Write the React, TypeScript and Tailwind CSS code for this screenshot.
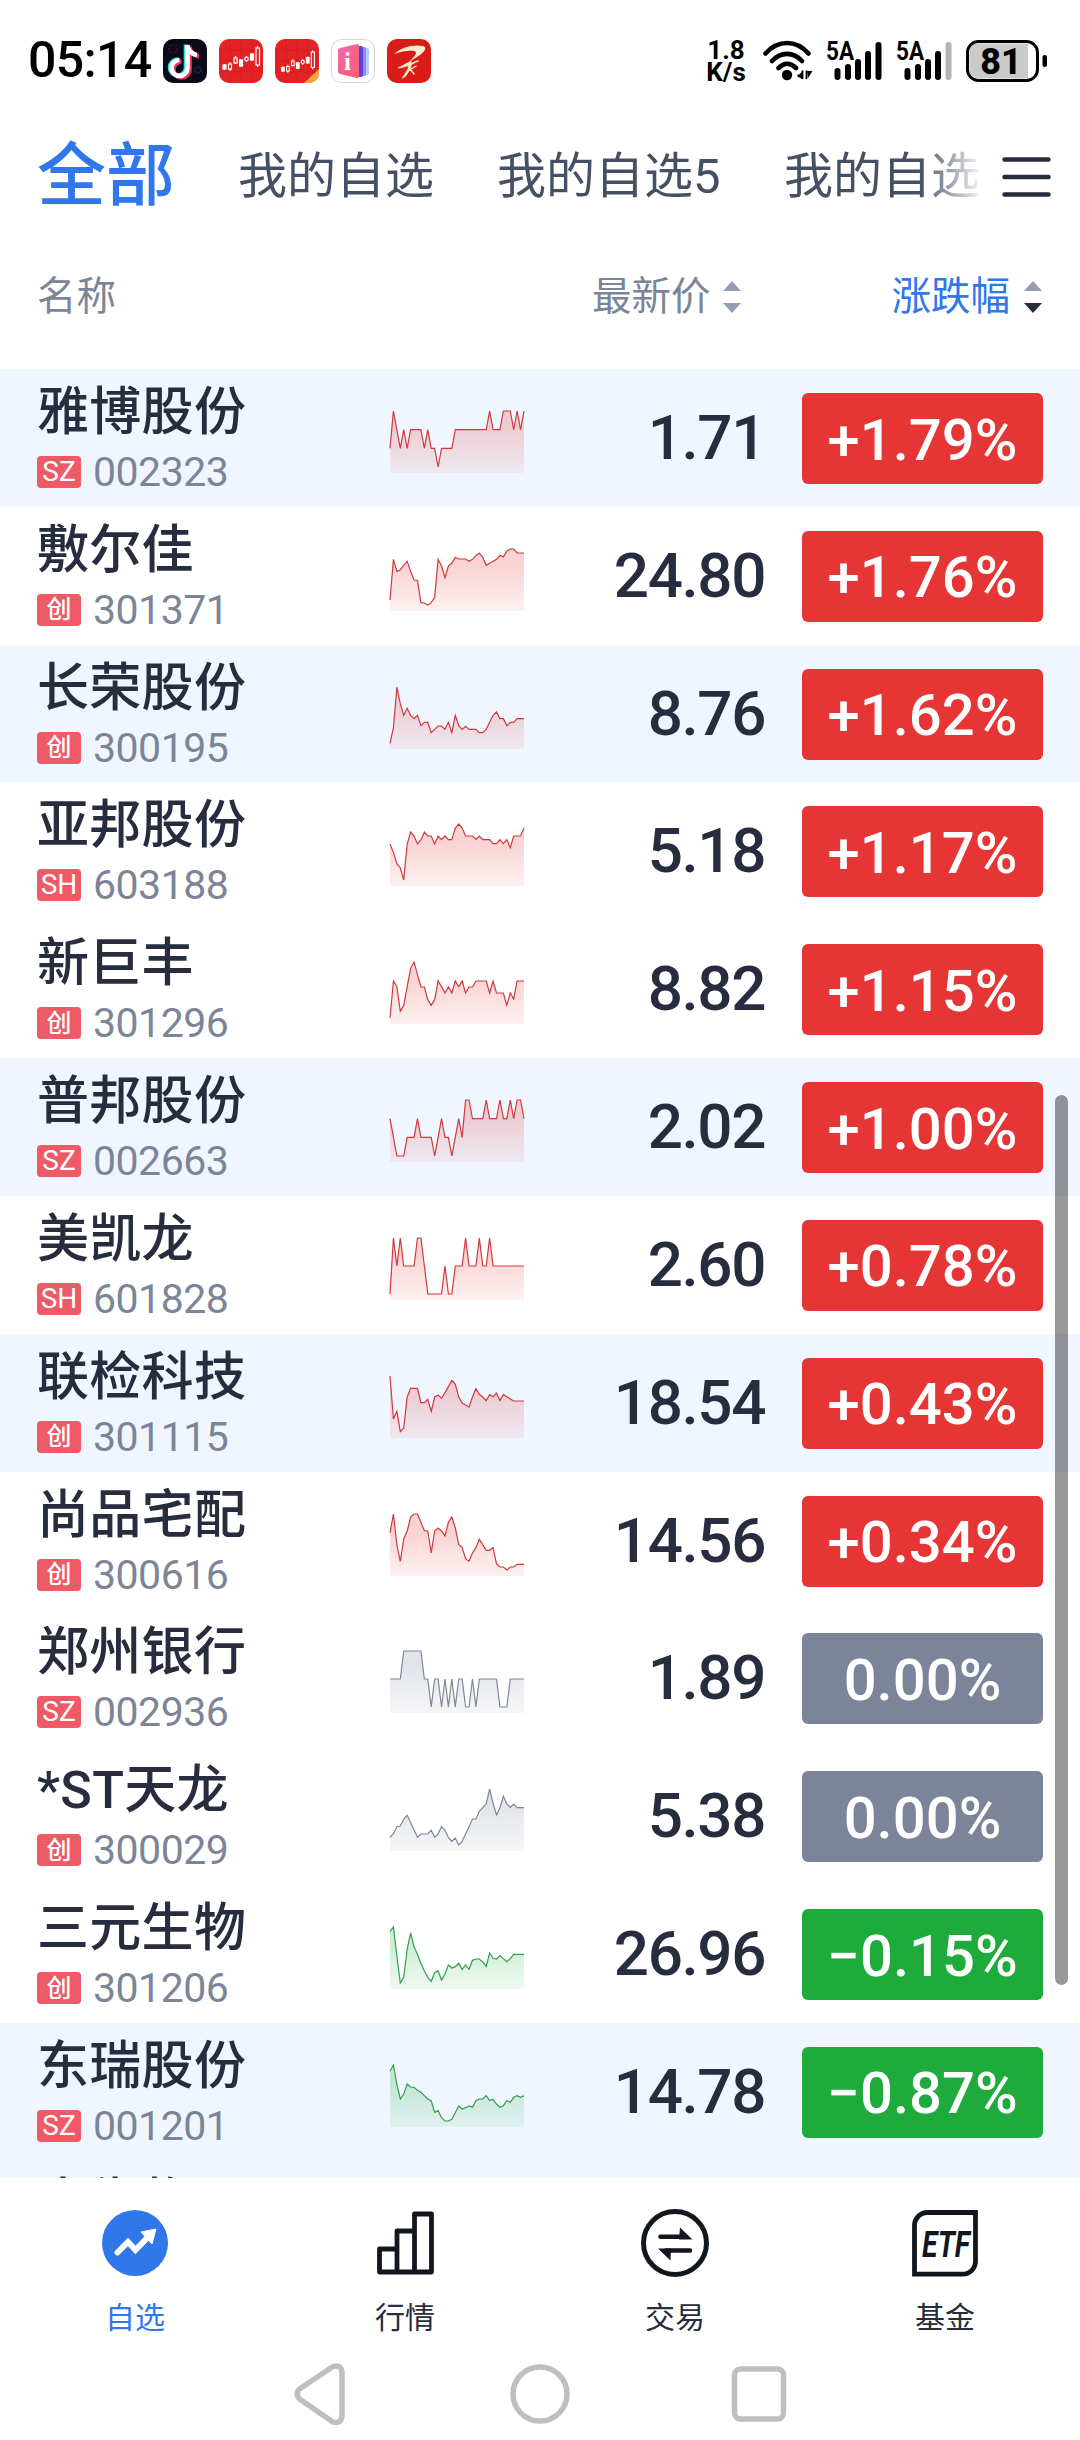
import { clsx } from "clsx";

type Trend = "up" | "flat" | "down";

type Stock = {
  name: string;
  market: string;
  code: string;
  price: string;
  change: string;
  trend: Trend;
  held?: boolean;
  // 40 samples, distance from the top of the chart
  line: number[];
};

const STOCKS: Stock[] = [
  {
    name: "雅博股份", market: "SZ", code: "002323", price: "1.71", change: "+1.79%", trend: "up", held: true,
    line: [112, 0, 56, 112, 56, 112, 56, 56, 56, 56, 112, 56, 112, 112, 168, 112, 112, 112, 112, 56, 56, 56, 56, 56, 56, 56, 56, 56, 56, 0, 56, 56, 56, 0, 0, 0, 56, 0, 56, 0],
  },
  {
    name: "敷尔佳", market: "创", code: "301371", price: "24.80", change: "+1.76%", trend: "up",
    line: [153, 31, 67, 62, 49, 37, 67, 93, 94, 161, 162, 168, 161, 145, 31, 51, 86, 51, 42, 25, 30, 30, 30, 37, 31, 20, 12, 25, 49, 43, 37, 31, 19, 24, 6, 0, 0, 12, 12, 12],
  },
  {
    name: "长荣股份", market: "创", code: "300195", price: "8.76", change: "+1.62%", trend: "up", held: true,
    line: [169, 122, 0, 50, 85, 64, 85, 95, 85, 116, 106, 106, 137, 127, 117, 117, 127, 106, 137, 85, 116, 127, 118, 127, 127, 127, 137, 137, 127, 106, 85, 75, 95, 95, 116, 106, 106, 95, 95, 95],
  },
  {
    name: "亚邦股份", market: "SH", code: "603188", price: "5.18", change: "+1.17%", trend: "up",
    line: [60, 85, 119, 132, 168, 60, 24, 36, 60, 48, 24, 36, 36, 60, 36, 47, 36, 47, 47, 12, 0, 12, 36, 36, 36, 46, 36, 47, 47, 47, 59, 59, 47, 59, 47, 71, 36, 36, 36, 12],
  },
  {
    name: "新巨丰", market: "创", code: "301296", price: "8.82", change: "+1.15%", trend: "up",
    line: [168, 57, 74, 148, 131, 74, 19, 0, 38, 75, 75, 113, 130, 113, 57, 74, 93, 75, 93, 57, 74, 57, 93, 75, 75, 57, 57, 57, 57, 93, 57, 93, 93, 93, 130, 93, 111, 57, 57, 57],
  },
  {
    name: "普邦股份", market: "SZ", code: "002663", price: "2.02", change: "+1.00%", trend: "up", held: true,
    line: [56, 112, 168, 168, 168, 112, 112, 112, 56, 112, 112, 112, 112, 168, 112, 56, 112, 112, 168, 112, 56, 112, 0, 0, 56, 56, 56, 56, 0, 56, 56, 56, 0, 56, 56, 0, 56, 0, 0, 56],
  },
  {
    name: "美凯龙", market: "SH", code: "601828", price: "2.60", change: "+0.78%", trend: "up",
    line: [168, 0, 84, 0, 84, 84, 84, 84, 0, 0, 84, 168, 168, 168, 168, 168, 84, 168, 168, 84, 84, 84, 0, 84, 84, 84, 0, 84, 84, 0, 84, 84, 84, 84, 84, 84, 84, 84, 84, 84],
  },
  {
    name: "联检科技", market: "创", code: "301115", price: "18.54", change: "+0.43%", trend: "up", held: true,
    line: [0, 129, 106, 167, 156, 63, 37, 37, 37, 80, 80, 70, 106, 63, 57, 67, 50, 32, 13, 25, 63, 81, 87, 93, 63, 38, 55, 63, 74, 56, 62, 51, 74, 56, 62, 69, 75, 75, 75, 75],
  },
  {
    name: "尚品宅配", market: "创", code: "300616", price: "14.56", change: "+0.34%", trend: "up",
    line: [57, 0, 93, 142, 75, 51, 9, 0, 0, 25, 50, 51, 117, 51, 42, 51, 66, 25, 9, 42, 91, 101, 134, 142, 117, 101, 76, 92, 109, 109, 101, 150, 159, 159, 168, 159, 159, 151, 151, 151],
  },
  {
    name: "郑州银行", market: "SZ", code: "002936", price: "1.89", change: "0.00%", trend: "flat",
    line: [84, 84, 84, 84, 0, 0, 0, 0, 0, 0, 84, 84, 168, 84, 84, 168, 84, 168, 84, 168, 84, 84, 168, 168, 84, 168, 84, 84, 84, 84, 84, 84, 168, 168, 168, 84, 84, 84, 84, 84],
  },
  {
    name: "*ST天龙", market: "创", code: "300029", price: "5.38", change: "0.00%", trend: "flat",
    line: [145, 134, 113, 111, 90, 79, 101, 123, 145, 135, 135, 135, 124, 145, 135, 113, 124, 146, 157, 147, 168, 157, 135, 113, 90, 90, 67, 56, 45, 0, 43, 78, 56, 22, 45, 55, 45, 56, 56, 56],
  },
  {
    name: "三元生物", market: "创", code: "301206", price: "26.96", change: "−0.15%", trend: "down",
    line: [13, 0, 87, 168, 151, 66, 18, 59, 82, 109, 132, 151, 163, 137, 131, 159, 141, 114, 123, 119, 109, 127, 114, 127, 100, 96, 96, 105, 118, 78, 94, 96, 86, 95, 104, 95, 82, 82, 82, 82],
  },
  {
    name: "东瑞股份", market: "SZ", code: "001201", price: "14.78", change: "−0.87%", trend: "down", held: true,
    line: [19, 0, 58, 102, 87, 57, 66, 67, 76, 82, 92, 102, 108, 142, 137, 158, 168, 168, 163, 143, 123, 132, 128, 123, 127, 107, 102, 102, 92, 106, 103, 117, 127, 122, 107, 112, 97, 92, 97, 92],
  },
];

const LINE_COLOR: Record<Trend, string> = { up: "#d0393c", flat: "#7c879b", down: "#2f9f4c" };
const FILL_COLOR: Record<Trend, string> = { up: "#e63535", flat: "#7c859b", down: "#1eab3c" };
const PILL_BG: Record<Trend, string> = { up: "bg-[#e63535]", flat: "bg-[#7b8498]", down: "bg-[#1eab3c]" };

export default function App() {
  return (
    <div className="flex h-[2440px] w-[1080px] flex-col overflow-hidden bg-white font-[Roboto,'Noto_Sans_CJK_SC',sans-serif] text-[#272d3e]">
      <StatusBar />
      <GroupTabs />
      <ListHeader />
      <main className="relative h-[1809px] shrink-0 overflow-hidden">
        {STOCKS.map((s) => (
          <StockRow key={s.code} stock={s} />
        ))}
        {/* next row, cut off by the tab bar */}
        <div className="h-[138px] bg-[#eff6ff] pt-[12px] pl-[37px] text-[52px] leading-[62px] font-medium">中生物</div>
        <div className="absolute top-[726px] right-[12px] h-[890px] w-[13px] rounded-full bg-black/40" />
      </main>
      <TabBar />
      <SystemNav />
    </div>
  );
}

/* ── status bar ── */

function StatusBar() {
  return (
    <header className="flex h-[122px] shrink-0 items-center pr-[32px] pl-[28px] text-black">
      <span className="w-[135px] pb-[2px] text-[50px] leading-none font-medium tracking-[-0.7px]">05:14</span>
      <div className="flex gap-[12px]">
        <TiktokIcon />
        <CandlesIcon />
        <CandlesIcon corner />
        <BookIcon />
        <BrushIcon />
      </div>
      <div className="ml-auto flex items-center">
        <div className="mr-[16px] flex w-[42px] flex-col items-center text-[26px] leading-[22px] font-bold">
          <span>1.8</span>
          <span>K/s</span>
        </div>
        <svg width="50" height="42" viewBox="0 0 50 42" fill="none" stroke="#000" strokeWidth="4.6" strokeLinecap="round" className="mr-[13px]">
          <path d="M2.5 13.5C15-.5 33-.5 45.500 13.500M9 21c9-9.500 21-9.500 30 0M15.500 28c5.500-5.500 12-5.500 17.500 0" />
          <circle cx="24" cy="35" r="5.200" fill="#000" stroke="none" />
          <path d="M34.500 36.500l5.500-6v9M43.500 39v-8.500M44 31h5.500l-4.500 7z" fill="#000" stroke="none" />
          <path d="M34.500 35.500h5M39.500 30.500v8.500M43.500 30.500v8.500" strokeWidth="1.800" strokeLinecap="butt" />
        </svg>
        <Signal />
        <Signal weak />
        <svg width="82" height="42" viewBox="0 0 82 42" className="overflow-visible">
          <rect x="1.500" y="1.500" width="70" height="39" rx="11" fill="#fff" stroke="#000" strokeWidth="3" />
          <path d="M12 3.500H62V38.500H12a8.500 8.500 0 0 1-8.500-8.500V12A8.500 8.500 0 0 1 12 3.500z" fill="#cacaca" />
          <rect x="76.500" y="15" width="4.500" height="12" rx="2.200" />
          <text x="35" y="34" fontSize="36" fontWeight="800" textAnchor="middle">
            81
          </text>
        </svg>
      </div>
    </header>
  );
}

function Signal({ weak }: { weak?: boolean }) {
  return (
    <svg width="56" height="42" viewBox="0 0 56 42" className="mr-[14px] overflow-visible">
      <text x="0" y="20" fontSize="25" fontWeight="700" textLength="28" lengthAdjust="spacingAndGlyphs">
        5A
      </text>
      <rect x="8.500" y="28" width="6" height="12" rx="3" />
      <rect x="19" y="24" width="6" height="16" rx="3" />
      <rect x="29" y="19" width="6" height="21" rx="3" />
      <rect x="39" y="11" width="6" height="29" rx="3" />
      <rect x="49.500" y="2" width="6" height="38" rx="3" fill={weak ? "#b3b3b3" : "#000"} />
    </svg>
  );
}

const NOTE = "M24.500 6v23a8 8 0 1 1-8-8M24.500 7c1 5 4 8 9.500 9";

function TiktokIcon() {
  return (
    <svg width="44" height="44" viewBox="0 0 44 44" fill="none" strokeWidth="4.600">
      <rect width="44" height="44" rx="10" fill="#0b0a18" />
      <circle cx="10" cy="10" r="4" stroke="#3b1524" strokeWidth="2" strokeDasharray="1.500 1.500" />
      <circle cx="35" cy="31" r="3" stroke="#22275e" strokeWidth="2" strokeDasharray="1.500 1" />
      <path d={NOTE} stroke="#25e6df" transform="translate(-1.500 -.5)" />
      <path d={NOTE} stroke="#f5315c" transform="translate(2 1.500)" />
      <path d={NOTE} stroke="#fff" />
    </svg>
  );
}

function CandlesIcon({ corner }: { corner?: boolean }) {
  return (
    <svg width="44" height="44" viewBox="0 0 44 44" fill="none" stroke="#fff" strokeWidth="1.200">
      <rect width="44" height="44" rx="10" fill="#e32226" stroke="none" />
      <path d="M11 1v42M22 1v42M33 1v42M1 11h42M1 22h42M1 33h42" stroke="#cf1b20" strokeWidth=".6" />
      <g transform={corner ? "translate(3 5) scale(.9)" : undefined}>
        <rect x="4" y="26" width="3" height="4" fill="#fff" />
        <path d="M5.500 25v6M11 23v9M16.500 17v8M22 20v8M27.500 17v6M33 14v8M38.500 7v21" />
        <rect x="9.500" y="25" width="3" height="5" fill="#e32226" />
        <rect x="15" y="19" width="3" height="5" fill="#e32226" />
        <rect x="20.500" y="21" width="3" height="6" fill="#fff" />
        <circle cx="27.500" cy="20" r="1.800" fill="#e32226" />
        <rect x="31.500" y="15" width="3" height="6" fill="#fff" />
        <rect x="37" y="9" width="3.500" height="17" fill="#e32226" />
      </g>
      {corner && <path d="M44 30v4a10 10 0 0 1-10 10h-5z" fill="#f0a83a" stroke="none" />}
    </svg>
  );
}

function BookIcon() {
  return (
    <svg width="44" height="44" viewBox="0 0 44 44">
      <defs>
        <linearGradient id="cover" x1="0" y1="0" x2="1" y2="1">
          <stop offset="0" stopColor="#f06bb0" />
          <stop offset="1" stopColor="#ff5a6e" />
        </linearGradient>
      </defs>
      <rect x=".5" y=".5" width="43" height="43" rx="10" fill="#fff" stroke="#d4d4d8" />
      <rect x="27" y="9" width="11" height="27" rx="2" fill="#b5cdfb" />
      <rect x="25" y="8" width="10" height="29" rx="2" fill="#8b90f5" />
      <rect x="23" y="7" width="9" height="31" rx="2" fill="#5c3fe0" />
      <path d="M9 9l17-4q2 0 2 2v30q0 2-2 2L9 35q-2-.5-2-2V11q0-1.500 2-2z" fill="url(#cover)" />
      <text x="16.500" y="31" fontSize="25" fontWeight="700" textAnchor="middle" fill="#fff" className="font-['Liberation_Serif',serif]">
        i
      </text>
    </svg>
  );
}

function BrushIcon() {
  return (
    <svg width="44" height="44" viewBox="0 0 44 44" fill="none" stroke="#fdeccb" strokeLinecap="round">
      <rect width="44" height="44" rx="10" fill="#d91c17" stroke="none" />
      <path d="M7 15C14 8 27 5 36 7c5 1.500 1 6-3 9l-10 6.500c3-4 6-6 6-9 0-3-13-2-22 1.500z" fill="#fdeccb" stroke="none" />
      <path d="M24 22c-4 2-7 4-13 7 5 0 9-2 13-4zM23 25c-2 5-4 9-8 14 3 0 5-3 9-11z" fill="#fdeccb" strokeWidth=".6" />
      <path d="M31 22c-4 1-7 3-9 6M29 27l-9 6M21 27l6 8" strokeWidth="1.300" />
    </svg>
  );
}

/* ── header ── */

function GroupTabs() {
  return (
    <nav className="relative flex h-[109px] shrink-0 items-center overflow-hidden pl-[37px] whitespace-nowrap text-[#465064]">
      <span className="w-[201px] text-[69px] leading-none font-medium text-[#3077e9]">全部</span>
      <span className="w-[259px] text-[49px] leading-none">我的自选</span>
      <span className="w-[287px] text-[49px] leading-none">我的自选5</span>
      <span className="text-[49px] leading-none">我的自选3</span>
      <div className="absolute inset-y-0 right-0 flex w-[160px] items-center bg-linear-to-r from-white/0 to-white to-40% pl-[82px]">
        <svg width="50" height="42" viewBox="0 0 50 42" stroke="#272d3e" strokeWidth="4.500" strokeLinecap="round">
          <path d="M2.500 3.500h44M2.500 21h44M2.500 38.500h44" />
        </svg>
      </div>
    </nav>
  );
}

function ListHeader() {
  return (
    <div className="flex h-[138px] shrink-0 items-center pr-[38px] pb-[7px] pl-[37px] text-[39.5px] leading-none text-[#7b8597]">
      <span>名称</span>
      <span className="ml-auto flex items-center gap-[12px]">
        最新价
        <SortArrows />
      </span>
      <span className="ml-[151px] flex items-center gap-[14px] text-[#3077e9]">
        涨跌幅
        <SortArrows desc />
      </span>
    </div>
  );
}

function SortArrows({ desc }: { desc?: boolean }) {
  return (
    <svg width="18" height="34" viewBox="0 0 18 34" fill="#949eb1">
      <path d="M9 1l9 10H0z" />
      <path d="M9 33l9-10H0z" fill={desc ? "#272d3e" : "#949eb1"} />
    </svg>
  );
}

/* ── list ── */

function StockRow({ stock }: { stock: Stock }) {
  return (
    <div className={clsx("flex h-[137.84px] pr-[37px] pl-[37px]", stock.held && "bg-[#eff6ff]")}>
      <div className="w-[352px] pt-[12px]">
        <div className="text-[52px] leading-[64px] font-medium tracking-[0.3px]">{stock.name}</div>
        <div className="mt-[7px] flex items-center gap-[12px]">
          <span
            className={clsx(
              "flex h-[32px] w-[44px] items-center justify-center rounded-[4px] bg-[#ee5a66] leading-none text-white",
              stock.market === "创" ? "text-[25px] font-medium" : "text-[28px]",
            )}
          >
            {stock.market}
          </span>
          <span className="text-[41px] leading-[40px] tracking-[-0.5px] text-[#7b8597]">{stock.code}</span>
        </div>
      </div>
      <Sparkline line={stock.line} trend={stock.trend} />
      <div className="flex-1 pt-[33px] pr-[1px] text-right text-[62px] leading-[72px] font-medium tracking-[-1.4px]">{stock.price}</div>
      <div
        className={clsx(
          "mt-[24px] ml-[36px] flex h-[91px] w-[241px] items-center justify-center rounded-[6px] pt-[2px] text-[58px] leading-none font-medium text-white",
          PILL_BG[stock.trend],
        )}
      >
        {stock.change}
      </div>
    </div>
  );
}

function Sparkline({ line, trend }: { line: number[]; trend: Trend }) {
  const points = line.map((y, i) => `${((i * 134) / 39 + 1).toFixed(2)},${(y / 3 + 2).toFixed(2)}`).join(" ");
  return (
    <svg width="136" height="66" viewBox="0 0 136 66" fill="none" className="mt-[40px]">
      <defs>
        <linearGradient id={`fill-${trend}`} x1="0" y1="0" x2="0" y2="64" gradientUnits="userSpaceOnUse">
          <stop offset="0.3" stopColor={FILL_COLOR[trend]} stopOpacity="0.22" />
          <stop offset="1" stopColor={FILL_COLOR[trend]} stopOpacity="0.07" />
        </linearGradient>
      </defs>
      <polygon points={`1,64 ${points} 135,64`} fill={`url(#fill-${trend})`} />
      <polyline points={points} stroke={LINE_COLOR[trend]} strokeWidth="1.200" />
    </svg>
  );
}

/* ── bottom ── */

function TabBar() {
  return (
    <footer className="grid h-[172px] shrink-0 grid-cols-4 bg-white text-[30px] leading-none">
      <Tab label="自选" active>
        <circle cx="34" cy="34" r="33" fill="#3077e9" />
        <path d="M16.500 43.500L27 33l7.500 8L47 28" stroke="#fff" strokeWidth="6" strokeLinecap="round" />
        <path d="M40 23l15-3-4 15z" fill="#fff" stroke="#fff" />
      </Tab>
      <Tab label="行情">
        <path d="M8.500 40h17.500v23h-17.500zM26 22h17.500v41h-17.500zM43.500 5h17v58h-17z" stroke="#12171f" strokeWidth="4.800" strokeLinejoin="round" />
      </Tab>
      <Tab label="交易">
        <circle cx="34" cy="34" r="31.500" stroke="#12171f" strokeWidth="5" />
        <path d="M19.500 27.700h24M25 41.500h24" stroke="#12171f" strokeWidth="4.600" strokeLinecap="round" />
        <path d="M39 18.500l12.500 12H38zM29.500 51.500L17 39.500h13z" fill="#12171f" />
      </Tab>
      <Tab label="基金">
        <path d="M3.500 65V17a13 13 0 0 1 13-13.500H64.500V52a13 13 0 0 1-13 13.200z" stroke="#12171f" strokeWidth="4.800" />
        <text
          x="11" y="48" fontSize="37" fontWeight="700" fontStyle="italic" fill="#12171f"
          textLength="48" lengthAdjust="spacingAndGlyphs"
        >
          ETF
        </text>
      </Tab>
    </footer>
  );
}

function Tab({ label, active, children }: { label: string; active?: boolean; children: React.ReactNode }) {
  return (
    <div className={clsx("flex flex-col items-center gap-[26px] pt-[31px]", active && "text-[#3077e9]")}>
      <svg width="68" height="68" viewBox="0 0 68 68" fill="none">
        {children}
      </svg>
      <span>{label}</span>
    </div>
  );
}

function SystemNav() {
  return (
    <div className="flex h-[87px] items-center justify-center">
      <svg width="500" height="64" viewBox="0 0 500 64" fill="none" stroke="#bfbfbf" strokeWidth="5.500" strokeLinejoin="round">
        <path d="M43 4.500L9.500 27Q4.500 32 9.500 37L43 60Q51 62.500 52 54V10Q51 2 43 4.500z" />
        <circle cx="250" cy="32" r="27" />
        <rect x="444.500" y="7" width="49" height="50" rx="6" />
      </svg>
    </div>
  );
}
